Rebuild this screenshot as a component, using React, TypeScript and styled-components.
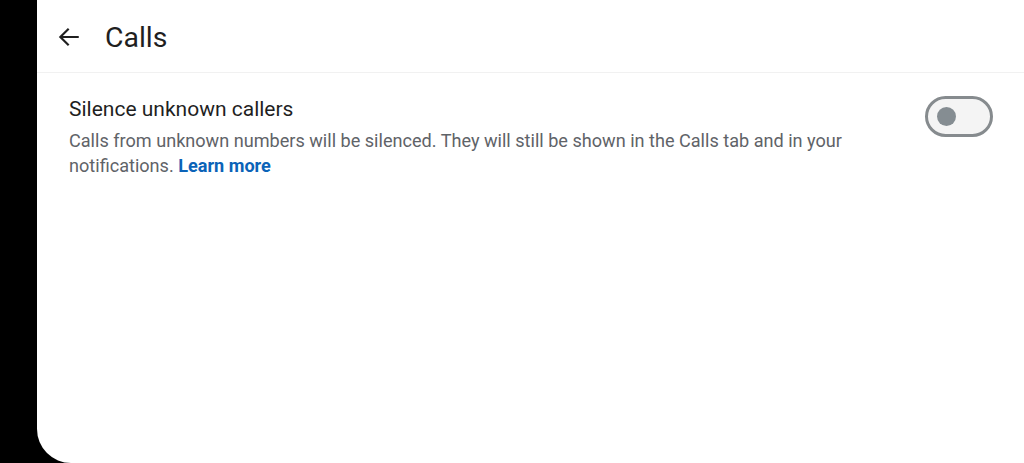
import React from 'react';
import styled, { createGlobalStyle } from 'styled-components';

const GlobalStyle = createGlobalStyle`
  html, body {
    margin: 0;
    padding: 0;
    background: #000;
    font-family: Roboto, "Noto Sans", Arial, sans-serif;
  }
`;

const Screen = styled.div`
  display: flex;
  width: 1024px;
  height: 463px;
  background: #000;
  overflow: hidden;
`;

const Panel = styled.div`
  flex: 1;
  margin-left: 37px;
  background: #fff;
  border-bottom-left-radius: 34px;
  display: flex;
  flex-direction: column;
`;

const Toolbar = styled.div`
  display: flex;
  align-items: center;
  height: 73px;
  padding-left: 18px;
  padding-top: 2px;
  border-bottom: 1px solid #f1f1f1;
  box-sizing: border-box;
`;

const BackButton = styled.button`
  display: flex;
  align-items: center;
  justify-content: center;
  width: 28px;
  height: 28px;
  padding: 0;
  border: none;
  background: none;
  color: #1f1f1f;
`;

const Title = styled.h1`
  margin: 0 0 0 22px;
  font-size: 28.4px;
  font-weight: 400;
  color: #1f1f1f;
`;

const SettingRow = styled.div`
  display: flex;
  align-items: flex-start;
  justify-content: space-between;
  padding: 22px 32px 0 32px;
`;

const SettingText = styled.div`
  display: flex;
  flex-direction: column;
  max-width: 800px;
`;

const SettingLabel = styled.div`
  font-size: 21px;
  color: #1f1f1f;
  line-height: 28px;
`;

const SettingDescription = styled.div`
  margin-top: 5px;
  font-size: 18.1px;
  line-height: 25px;
  color: #5f6368;
`;

const LearnMore = styled.a`
  display: inline-block;
  color: #0b63b8;
  font-weight: 700;
  text-decoration: none;
`;

const Switch = styled.div`
  flex: none;
  position: relative;
  width: 68px;
  height: 41px;
  margin-top: 1px;
  margin-right: -1px;
  box-sizing: border-box;
  border: 3px solid #868b8e;
  border-radius: 21px;
  background: #f4f4f4;
`;

const Knob = styled.div`
  position: absolute;
  left: 9px;
  top: 8px;
  width: 19px;
  height: 19px;
  border-radius: 50%;
  background: #858d92;
`;

const App = () => (
  <>
    <GlobalStyle />
    <Screen>
      <Panel>
        <Toolbar>
          <BackButton aria-label="Back">
            <svg width="26" height="26" viewBox="0 0 24 24" fill="none">
              <path d="M20 12H4.5M11 5l-7 7 7 7" stroke="#1f1f1f" strokeWidth="2" strokeLinecap="square" />
            </svg>
          </BackButton>
          <Title>Calls</Title>
        </Toolbar>
        <SettingRow>
          <SettingText>
            <SettingLabel>Silence unknown callers</SettingLabel>
            <SettingDescription>
              Calls from unknown numbers will be silenced. They will still be shown in the Calls tab and in your
              notifications. <LearnMore href="#">Learn more</LearnMore>
            </SettingDescription>
          </SettingText>
          <Switch>
            <Knob />
          </Switch>
        </SettingRow>
      </Panel>
    </Screen>
  </>
);

export default App;
